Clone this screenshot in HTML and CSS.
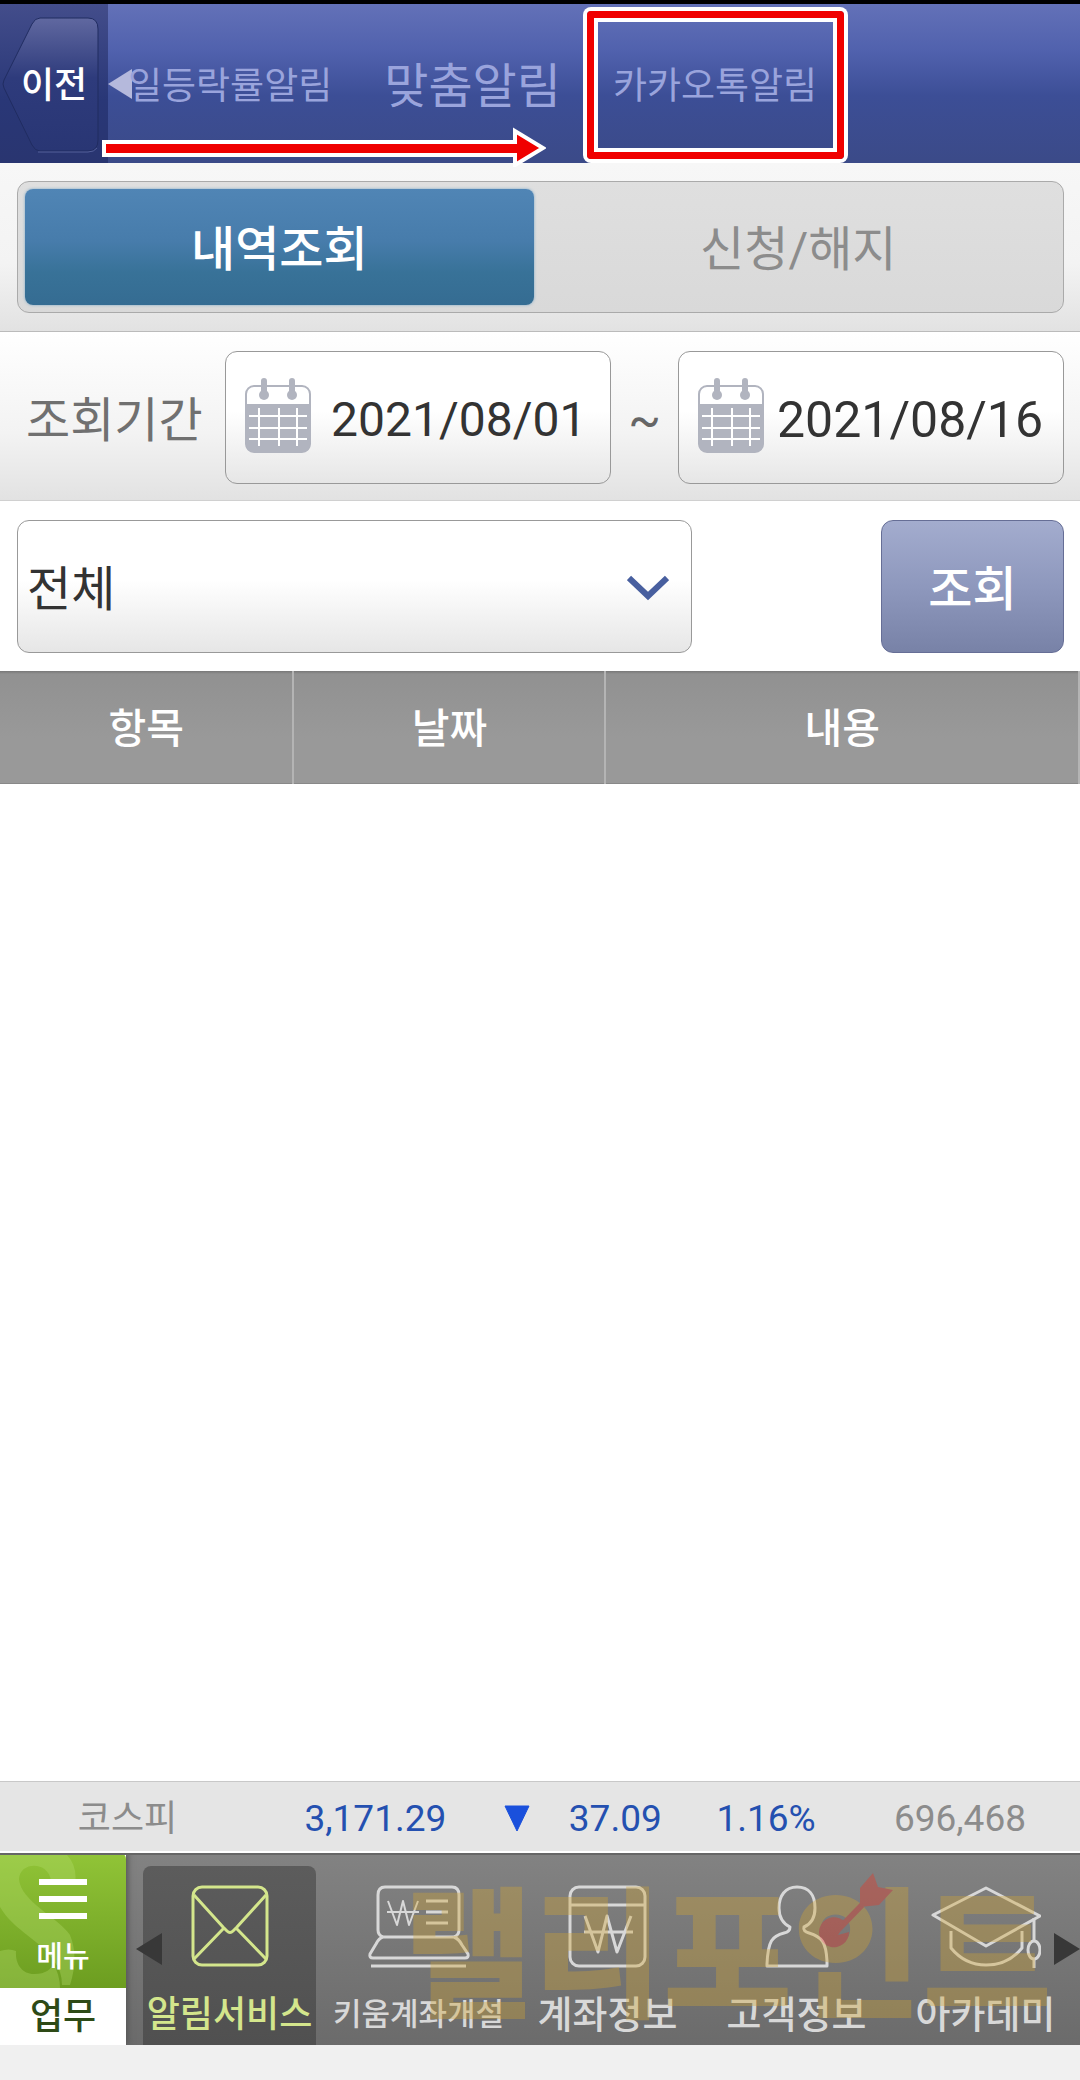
FILE: index.html
```html
<!DOCTYPE html>
<html lang="ko">
<head>
    <meta charset="UTF-8">
    <meta name="viewport" content="width=device-width, initial-scale=1.0">
    <title>카카오톡알림</title>
    <link rel="stylesheet" href="styles.css">
</head>
<body>
    <header class="top-bar">
        <button type="button" class="back-button">
            <svg class="back-shape" viewBox="0 0 108 159" aria-hidden="true">
                <defs>
                    <linearGradient id="back-fill" x1="0" y1="0" x2="0" y2="1">
                        <stop offset="0" stop-color="#6068a0"/>
                        <stop offset=".45" stop-color="#2e3b7c"/>
                        <stop offset="1" stop-color="#293674"/>
                    </linearGradient>
                </defs>
                <path d="M40 14H88Q98 14 98 25V136Q98 147 88 147H40Q35 147 32 141L4 84Q2 80 4 76L32 20Q35 14 40 14Z" fill="url(#back-fill)" stroke="#202c61" stroke-width="1"/>
                <path d="M38 148H88Q94 148 97 144" fill="none" stroke="#54609b" stroke-width="1"/>
            </svg>
            <span class="back-text">이전</span>
        </button>
        <nav class="tabs">
            <svg class="tabs-prev" viewBox="0 0 24 30" aria-hidden="true"><path d="M0 15L24 0V30Z" fill="#b5b9dc"/></svg>
            <a href="#" class="tab tab-long">일등락률알림</a>
            <a href="#" class="tab">맞춤알림</a>
            <a href="#" class="tab tab-long tab-marked">카카오톡알림</a>
        </nav>
        <svg class="swipe-arrow" viewBox="0 0 444 40" aria-hidden="true">
            <path d="M2 15H413V4L441 21L413 38V28H2Z" fill="#f00000" stroke="#fff" stroke-width="4"/>
        </svg>
    </header>

    <main>
        <section class="segment-row">
            <div class="segment">
                <button type="button" class="segment-button active">내역조회</button>
                <button type="button" class="segment-button">신청/해지</button>
            </div>
        </section>

        <section class="period-row">
            <label for="date-from" class="period-label">조회기간</label>
            <div class="date-box">
                <svg class="calendar" viewBox="0 0 66 76" aria-hidden="true">
                    <rect x="1" y="8" width="64" height="66" rx="8" fill="#fff" stroke="#b1b4bf" stroke-width="2"/>
                    <path d="M1 26H65V67Q65 74 57 74H9Q1 74 1 67Z" fill="#b1b4bf"/>
                    <path d="M19 3V18M47 3V18" stroke="#b1b4bf" stroke-width="6" stroke-linecap="round"/>
                    <circle cx="19" cy="17" r="5" fill="#b1b4bf"/><circle cx="47" cy="17" r="5" fill="#b1b4bf"/>
                    <path d="M4 38H62M4 50H62M4 61H62M14 30V68M34 30V68M52 30V68" stroke="#fff" stroke-width="2"/>
                </svg>
                <input type="text" id="date-from" class="date-input date-from" value="2021/08/01">
            </div>
            <span class="tilde">~</span>
            <div class="date-box">
                <svg class="calendar" viewBox="0 0 66 76" aria-hidden="true">
                    <rect x="1" y="8" width="64" height="66" rx="8" fill="#fff" stroke="#b1b4bf" stroke-width="2"/>
                    <path d="M1 26H65V67Q65 74 57 74H9Q1 74 1 67Z" fill="#b1b4bf"/>
                    <path d="M19 3V18M47 3V18" stroke="#b1b4bf" stroke-width="6" stroke-linecap="round"/>
                    <circle cx="19" cy="17" r="5" fill="#b1b4bf"/><circle cx="47" cy="17" r="5" fill="#b1b4bf"/>
                    <path d="M4 38H62M4 50H62M4 61H62M14 30V68M34 30V68M52 30V68" stroke="#fff" stroke-width="2"/>
                </svg>
                <input type="text" class="date-input" value="2021/08/16" aria-label="조회기간">
            </div>
        </section>

        <section class="search-row">
            <div class="select-box">
                <select class="type-select" aria-label="항목">
                    <option>전체</option>
                </select>
                <svg class="chevron" viewBox="0 0 42 26" aria-hidden="true"><path d="M2 3L21 21L40 3" fill="none" stroke="#485f9f" stroke-width="6"/></svg>
            </div>
            <button type="button" class="search-button">조회</button>
        </section>

        <table class="list">
            <thead>
                <tr>
                    <th class="col-item">항목</th>
                    <th class="col-date">날짜</th>
                    <th>내용</th>
                </tr>
            </thead>
            <tbody></tbody>
        </table>
    </main>

    <section class="ticker">
        <span class="ticker-name">코스피</span>
        <span class="ticker-price">3,171.29</span>
        <svg class="ticker-down" viewBox="0 0 26 27" aria-hidden="true"><path d="M1 1H25L13 26Z" fill="#1a50dc" stroke="#1a50dc" stroke-width="1" stroke-linejoin="round"/></svg>
        <span class="ticker-diff">37.09</span>
        <span class="ticker-rate">1.16%</span>
        <span class="ticker-volume">696,468</span>
    </section>

    <footer class="bottom-bar">
        <div class="menu">
            <button type="button" class="menu-button">
                <svg class="menu-swirl" viewBox="0 0 126 135" aria-hidden="true">
                    <path d="M8 0H65Q78 12 75 31Q65 25 51 28C49 8 20 8 19 26C20 48 60 66 70 82Q79 104 70 132H62Q62 118 54 108C42 88 14 78 0 54V0Z" fill="#b4dc6c" opacity=".35"/>
                    <path d="M0 98Q9 95 16 98C15 112 23 121 34 121C46 121 52 116 53 110Q60 122 60 135H0Z" fill="#b4dc6c" opacity=".35"/>
                </svg>
                <svg class="menu-lines" viewBox="0 0 48 40" aria-hidden="true"><path d="M0 3H48M0 20H48M0 37H48" stroke="#fff" stroke-width="6"/></svg>
                <span class="menu-text">메뉴</span>
            </button>
            <a href="#" class="menu-work">업무</a>
        </div>
        <nav class="shortcuts">
            <a href="#" class="shortcut active">
                <svg class="icon" viewBox="0 0 110 84" aria-hidden="true">
                    <rect x="18" y="3" width="74" height="78" rx="9"/>
                    <path d="M19 11L48 43L52 47Q55 50 58 47L62 43L91 11M19 75L48 45M62 45L91 75"/>
                </svg>
                <span>알림서비스</span>
            </a>
            <a href="#" class="shortcut small">
                <svg class="icon" viewBox="0 0 110 84" aria-hidden="true">
                    <path d="M19 53Q14 51 14 46V11Q14 3 21 3H88Q95 3 95 11V46Q95 51 90 53M19 53H90Q95 55 98 61L104 70Q105 74 101 74H9Q5 74 6 70L12 60Q15 54 19 53Z"/>
                    <path d="M7 82H102M62 17H84M62 28H84M62 39H84"/>
                    <path d="M24 17L33 41L39 17L45 41L54 17M23 28H55" stroke-width="2"/>
                </svg>
                <span>키움계좌개설</span>
            </a>
            <a href="#" class="shortcut">
                <svg class="icon" viewBox="0 0 110 84" aria-hidden="true">
                    <rect x="17" y="3" width="75" height="79" rx="9"/>
                    <path d="M18 21H91M32 32L45 68L54 32L64 68L78 32M31 48H80"/>
                </svg>
                <span>계좌정보</span>
            </a>
            <a href="#" class="shortcut">
                <svg class="icon" viewBox="0 0 110 84" aria-hidden="true">
                    <path d="M48 43C48 46 47 48 42 49C30 52 26 57 25 80V82H85V77C84 58 80 53 67 49C63 48 61 46 62 43C69 40 73 33 73 24C73 11 67 3 55 3C43 3 37 12 37 24C37 34 42 40 48 43Z"/>
                </svg>
                <span>고객정보</span>
            </a>
            <a href="#" class="shortcut">
                <svg class="icon" viewBox="0 0 110 84" aria-hidden="true">
                    <path d="M2 31L55 4L109 32L55 62Z"/>
                    <path d="M20 47V64Q34 81 55 81Q77 81 91 64V47M103 34V57M103 74V84"/>
                    <ellipse cx="103" cy="66" rx="6" ry="9"/>
                </svg>
                <span>아카데미</span>
            </a>
        </nav>
        <svg class="move-prev" viewBox="0 0 26 32" aria-hidden="true"><path d="M0 16L26 0V32Z" fill="#383838"/></svg>
        <svg class="move-next" viewBox="0 0 26 32" aria-hidden="true"><path d="M26 16L0 0V32Z" fill="#383838"/></svg>
        <div class="watermark">
            <span>랠리포인트</span>
            <svg class="dart" viewBox="0 0 76 78" aria-hidden="true">
                <path d="M15 62L44 32" stroke="#ee3322" stroke-width="6"/>
                <path d="M42 34L42 15L55 0L60 14L75 17L61 32Z" fill="#ee3322"/>
                <path d="M27 49A15 15 0 1 0 31 59L20 62Z" fill="#ee3322"/>
            </svg>
        </div>
    </footer>
</body>
</html>
```

FILE: styles.css
```css
* {
    box-sizing: border-box;
}

body {
    margin: 0;
    min-height: 100vh;
    display: flex;
    flex-direction: column;
    background-color: #f0f0f0;
    font-family: Roboto, "Noto Sans CJK KR", sans-serif;
    font-size: 48px;
    line-height: 60px;
    color: #333;
}

button, input, select {
    margin: 0;
    padding: 0;
    border: 0;
    font: inherit;
    color: inherit;
    background: none;
}

a {
    color: inherit;
    text-decoration: none;
}

svg {
    display: block;
    flex: none;
}

/* top bar */
.top-bar {
    position: relative;
    display: flex;
    height: 163px;
    border-top: 4px solid #000;
    background: linear-gradient(#6371b8, #5061ad 30%, #3c4e96 58%, #3b4a88);
}

.back-button {
    position: relative;
    width: 108px;
    flex: none;
    padding-top: 4px;
    background: linear-gradient(#434d8b, #293777 60%, #293570);
    color: #fff;
    font-size: 36px;
    font-weight: 500;
}

.back-shape {
    position: absolute;
    top: 0;
    left: 0;
    width: 108px;
}

.back-text {
    position: relative;
}

.tabs {
    display: flex;
    align-items: center;
    flex: 1;
    color: #9aa4dc;
}

.tabs-prev {
    width: 24px;
    margin-right: -4px;
}

.tab {
    display: flex;
    align-items: center;
    height: 100%;
    margin-right: 52px;
    padding-top: 6px;
}

.tab-long {
    font-size: 37px;
}

.tab-marked {
    position: relative;
}

.tab-marked::after {
    content: "";
    position: absolute;
    inset: 7px -27px 4px -26px;
    border: 7px solid #f00000;
    border-radius: 4px;
    box-shadow: 0 0 0 4px #fff, inset 0 0 0 4px #fff;
}

.swipe-arrow {
    position: absolute;
    left: 102px;
    top: 123px;
    width: 444px;
    z-index: 1;
}

/* content */
main {
    flex: 1;
    background-color: #fff;
}

.segment-row {
    padding: 18px 16px 18px 17px;
    border-bottom: 1px solid #bbb;
    background: linear-gradient(#f7f7f7, #f3f3f3 60%, #e2e2e2);
}

.segment {
    display: flex;
    height: 132px;
    padding: 7px 0 7px 7px;
    border: 1px solid #aaa;
    border-radius: 12px;
    background: linear-gradient(#dfdfdf, #d9d9d9);
}

.segment-button {
    flex: 1;
    padding-top: 6px;
    color: #8c8c8c;
}

.segment-button.active {
    flex: none;
    width: 49%;
    border-radius: 8px;
    background: linear-gradient(#5085b5, #477cab 45%, #387298 72%, #356c92);
    box-shadow: 0 0 3px #7ba7c7;
    color: #fff;
    font-weight: 500;
}

.period-row {
    display: flex;
    align-items: center;
    padding: 19px 16px 16px 26px;
    border-bottom: 1px solid #d0d0d0;
    background: linear-gradient(#fff, #f3f3f3 60%, #e2e2e2);
}

.period-label {
    width: 199px;
    padding-top: 6px;
    color: #707070;
}

.date-box,
.type-select {
    height: 133px;
    border: 1px solid #999;
    border-radius: 12px;
    background: linear-gradient(#fff 45%, #e6e6e6);
}

.date-box {
    display: flex;
    align-items: center;
    flex: 1;
    min-width: 0;
    padding-left: 19px;
}

.calendar {
    width: 66px;
    margin-bottom: 4px;
}

.date-input {
    flex: 1;
    min-width: 0;
    padding: 5px 0 0 13px;
    font-size: 50px;
}

.date-from {
    padding-left: 20px;
    font-size: 48px;
}

.tilde {
    width: 67px;
    padding-top: 6px;
    text-align: center;
    color: #666;
}

.search-row {
    display: flex;
    justify-content: space-between;
    padding: 19px 16px 18px 17px;
}

.select-box {
    position: relative;
    width: 64.5%;
}

.type-select {
    appearance: none;
    display: block;
    width: 100%;
    padding: 6px 0 0 9px;
}

.chevron {
    position: absolute;
    right: 23px;
    top: 55px;
    width: 42px;
    pointer-events: none;
}

.search-button {
    width: 183px;
    padding-top: 6px;
    border: 1px solid #666e96;
    border-radius: 12px;
    background: linear-gradient(#a3acce, #8e98bd 50%, #7882a7);
    color: #fff;
    font-weight: 500;
}

.list {
    width: 100%;
    border-collapse: collapse;
    table-layout: fixed;
}

.list th {
    height: 112px;
    padding: 5px 0 0;
    border-right: 2px solid #b4b4b4;
    border-bottom: 1px solid #888;
    background: linear-gradient(#777, #919191 3px, #999 60%);
    color: #fff;
    font-size: 41px;
    font-weight: 500;
}

.list .col-item {
    width: 27.2%;
}

.list .col-date {
    width: 28.9%;
}

/* index ticker */
.ticker {
    display: grid;
    grid-template-columns: 24% 19.5% 9.5% 11.5% 15% 1fr;
    align-items: center;
    height: 72px;
    padding: 4px 54px 0 0;
    border-top: 1px solid #c8c8c8;
    border-bottom: 2px solid #fff;
    background-color: #e5e5e5;
    color: #2450b0;
    font-size: 37px;
    text-align: right;
}

.ticker-name {
    padding-right: 69px;
    color: #8c8c8c;
    font-size: 36px;
}

.ticker-down {
    width: 26px;
    justify-self: end;
    margin-right: 14px;
}

.ticker-volume {
    color: #8c8c8c;
}

/* bottom bar */
.bottom-bar {
    position: relative;
    display: flex;
    height: 192px;
    margin-bottom: 35px;
    border-top: 2px solid #666;
    background: linear-gradient(#828282, #6b6b6b);
    overflow: hidden;
}

.menu {
    width: 126px;
    flex: none;
    margin-top: -2px;
    background-color: #fff;
    box-shadow: 2px 0 6px #555;
}

.menu-button {
    position: relative;
    display: flex;
    flex-direction: column;
    align-items: center;
    width: 100%;
    height: 135px;
    padding-top: 26px;
    border-top-right-radius: 6px;
    background: linear-gradient(#91c437, #6c9d20);
    color: #fff;
    font-size: 29px;
    line-height: 36px;
    font-weight: 500;
}

.menu-swirl {
    position: absolute;
    top: 0;
    left: 0;
    width: 126px;
}

.menu-lines {
    position: relative;
    width: 48px;
}

.menu-text {
    position: relative;
    margin-top: 20px;
}

.menu-work {
    display: block;
    padding-top: 2px;
    color: #2e4a16;
    font-size: 36px;
    line-height: 54px;
    font-weight: 500;
    text-align: center;
}

.shortcuts {
    display: flex;
    flex: 1;
    padding-left: 9px;
}

.shortcut {
    display: flex;
    flex: 1;
    flex-direction: column;
    align-items: center;
    min-width: 0;
    margin: 11px 8px 0;
    padding-top: 18px;
    border-radius: 8px 8px 0 0;
    color: #d8d8d8;
    font-size: 38px;
    font-weight: 500;
    white-space: nowrap;
}

.shortcut span {
    margin-top: 17px;
}

.shortcut.active {
    background: linear-gradient(#5c5c5c, #505050);
    color: #d4e68c;
    font-size: 36px;
}

.shortcut.small {
    font-size: 31px;
}

.icon {
    width: 110px;
    fill: none;
    stroke: currentColor;
    stroke-width: 3;
    stroke-linejoin: round;
}

.move-prev,
.move-next {
    position: absolute;
    top: 78px;
    width: 26px;
}

.move-prev {
    left: 136px;
}

.move-next {
    right: 0;
}

.watermark {
    position: absolute;
    right: 28px;
    top: 3px;
    color: #d2a534;
    font-size: 141px;
    line-height: 200px;
    font-weight: 900;
    opacity: .36;
    pointer-events: none;
}

.dart {
    position: absolute;
    right: 158px;
    top: 15px;
    width: 76px;
}
```
